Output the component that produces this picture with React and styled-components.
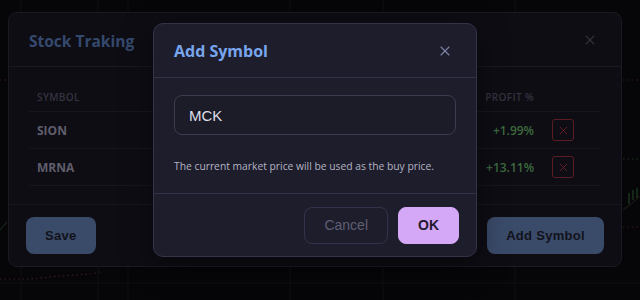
import styled, { createGlobalStyle } from "styled-components";
import { X } from "lucide-react";

const GlobalStyle = createGlobalStyle`
  html, body {
    margin: 0;
    padding: 0;
    background: #060609;
    font-family: "Open Sans", "Noto Sans", sans-serif;
  }
`;

const SPage = styled.div`
  position: relative;
  width: 640px;
  height: 300px;
  overflow: hidden;
  background: #060609;
  display: flex;
  align-items: flex-start;
`;

const SChart = styled.svg`
  position: absolute;
  inset: 0;
  width: 640px;
  height: 300px;
`;

const SPanel = styled.div`
  position: relative;
  margin: 12px 0 0 8px;
  width: 612px;
  height: 253px;
  background: #0e0d14;
  border: 1px solid #1b1a24;
  border-radius: 9px;
  display: flex;
  flex-direction: column;
`;

const SPanelHeader = styled.div`
  height: 53px;
  display: flex;
  align-items: center;
  justify-content: space-between;
  padding: 0 23px 0 20px;
  border-bottom: 1px solid #1a1922;
`;

const SPanelTitle = styled.h2`
  margin: 2px 0 0;
  font-size: 15.5px;
  font-weight: 700;
  color: #35496e;
`;

const SCloseIcon = styled(X)`
  color: ${(p) => p.$tone};
`;

const STable = styled.div`
  flex: 1;
  padding: 17px 21px 0 20px;
  display: flex;
  flex-direction: column;
`;

const SRow = styled.div`
  display: grid;
  grid-template-columns: 1fr 70px 58px;
  align-items: center;
  height: ${(p) => (p.$head ? "27px" : "36px")};
  padding: 0 8px;
  border-bottom: 1px solid #17161f;
`;

const SHeadCell = styled.span`
  font-size: 10px;
  font-weight: 600;
  letter-spacing: 0.4px;
  color: #34333f;
  text-align: ${(p) => (p.$right ? "right" : "left")};
  padding-bottom: 1px;
`;

const SSymbol = styled.span`
  font-size: 12px;
  font-weight: 700;
  color: #5f5e6c;
`;

const SProfit = styled.span`
  font-size: 12px;
  font-weight: 600;
  color: #3c6a3d;
  text-align: right;
`;

const SDelete = styled.div`
  justify-self: start;
  margin-left: 18px;
  width: 22px;
  height: 22px;
  box-sizing: border-box;
  border: 1px solid #5a1d23;
  border-radius: 3px;
  display: flex;
  align-items: center;
  justify-content: center;
  color: #6e2128;
`;

const SPanelFooter = styled.div`
  height: 61px;
  display: flex;
  align-items: center;
  justify-content: space-between;
  padding: 0 17px 0 17px;
  border-top: 1px solid #17161f;
`;

const SDimButton = styled.button`
  height: 37px;
  padding: 0 ${(p) => p.$pad}px;
  border: none;
  border-radius: 8px;
  background: #3a4b6a;
  color: #12121a;
  font-family: "Liberation Sans", Arial, sans-serif;
  font-size: 13px;
  font-weight: 700;
  letter-spacing: 0.3px;
`;

const SModal = styled.div`
  position: absolute;
  left: 153px;
  top: 23px;
  width: 322px;
  height: 232px;
  background: #1e1d2b;
  border: 1px solid #34334a;
  border-radius: 10px;
  display: flex;
  flex-direction: column;
  box-shadow: 0 8px 30px rgba(0, 0, 0, 0.5);
`;

const SModalHeader = styled.div`
  height: 53px;
  display: flex;
  align-items: center;
  justify-content: space-between;
  padding: 0 23px 0 20px;
  border-bottom: 1px solid #33324a;
`;

const SModalTitle = styled.h3`
  margin: 0;
  font-size: 16px;
  font-weight: 700;
  color: #78a6ee;
`;

const SModalBody = styled.div`
  height: 116px;
  padding: 17px 20px 0 20px;
  box-sizing: border-box;
  border-bottom: 1px solid #33324a;
`;

const SInput = styled.div`
  height: 40px;
  box-sizing: border-box;
  border: 1px solid #3c3b50;
  border-radius: 8px;
  background: #1c1b28;
  display: flex;
  align-items: center;
  padding-left: 14px;
  font-family: "Liberation Sans", Arial, sans-serif;
  font-size: 15px;
  color: #dedee8;
`;

const SHint = styled.p`
  margin: 24px 0 0;
  font-size: 10.3px;
  color: #b3b3c4;
`;

const SModalFooter = styled.div`
  flex: 1;
  display: flex;
  align-items: center;
  justify-content: flex-end;
  gap: 10px;
  padding: 0 17px;
`;

const SModalButton = styled.button`
  height: 37px;
  box-sizing: border-box;
  padding: 0 ${(p) => p.$pad}px;
  border-radius: 8px;
  border: 1px solid ${(p) => (p.$primary ? "#d4a8f7" : "#33324a")};
  background: ${(p) => (p.$primary ? "#d4a8f7" : "transparent")};
  color: ${(p) => (p.$primary ? "#23182e" : "#5f5f74")};
  font-family: "Liberation Sans", Arial, sans-serif;
  font-size: 14px;
  font-weight: ${(p) => (p.$primary ? 700 : 400)};
`;

const rows = [
  { symbol: "SION", profit: "+1.99%" },
  { symbol: "MRNA", profit: "+13.11%" },
];

function ChartBackground() {
  const dotted = { strokeDasharray: "1.5 3", strokeWidth: 1.2 };
  return (
    <SChart viewBox="0 0 640 300">
      <g stroke="#0e0e14" strokeWidth="1">
        <line x1="21" y1="0" x2="21" y2="300" />
        <line x1="98" y1="0" x2="98" y2="300" />
        <line x1="128" y1="0" x2="128" y2="300" />
        <line x1="290" y1="0" x2="290" y2="300" />
        <line x1="383" y1="0" x2="383" y2="300" />
        <line x1="515" y1="0" x2="515" y2="300" />
        <line x1="0" y1="283" x2="640" y2="283" />
      </g>
      <line x1="0" y1="80" x2="8" y2="80" stroke="#3a1418" {...dotted} />
      <line x1="623" y1="80" x2="640" y2="80" stroke="#3a1418" {...dotted} />
      <line x1="623" y1="159" x2="640" y2="159" stroke="#1d3a1d" {...dotted} />
      <line x1="623" y1="227" x2="640" y2="227" stroke="#3a1418" {...dotted} />
      <polyline
        points="0,279 30,279 60,276 90,274 100,272"
        fill="none"
        stroke="#3a1c22"
        {...dotted}
      />
      <path d="M623 210 Q632 204 640 196" fill="none" stroke="#2a1c1c" strokeWidth="1" />
      <g stroke="#234a26" strokeWidth="1">
        <line x1="629" y1="193" x2="629" y2="204" />
        <line x1="633" y1="190" x2="633" y2="200" />
        <line x1="637" y1="188" x2="637" y2="198" />
      </g>
      <path d="M0 230 L7 222" stroke="#1c331d" strokeWidth="1" />
    </SChart>
  );
}

function App() {
  return (
    <SPage>
      <GlobalStyle />
      <ChartBackground />
      <SPanel>
        <SPanelHeader>
          <SPanelTitle>Stock Traking</SPanelTitle>
          <SCloseIcon $tone="#32313d" size={16} strokeWidth={1.6} />
        </SPanelHeader>
        <STable>
          <SRow $head>
            <SHeadCell>SYMBOL</SHeadCell>
            <SHeadCell $right>PROFIT %</SHeadCell>
            <span />
          </SRow>
          {rows.map((r) => (
            <SRow key={r.symbol}>
              <SSymbol>{r.symbol}</SSymbol>
              <SProfit>{r.profit}</SProfit>
              <SDelete>
                <X size={13} strokeWidth={1.6} />
              </SDelete>
            </SRow>
          ))}
        </STable>
        <SPanelFooter>
          <SDimButton $pad={19}>Save</SDimButton>
          <SDimButton $pad={19}>Add Symbol</SDimButton>
        </SPanelFooter>
      </SPanel>

      <SModal>
        <SModalHeader>
          <SModalTitle>Add Symbol</SModalTitle>
          <SCloseIcon $tone="#7c84a8" size={16} strokeWidth={1.6} />
        </SModalHeader>
        <SModalBody>
          <SInput>MCK</SInput>
          <SHint>The current market price will be used as the buy price.</SHint>
        </SModalBody>
        <SModalFooter>
          <SModalButton $pad={19}>Cancel</SModalButton>
          <SModalButton $primary $pad={19}>OK</SModalButton>
        </SModalFooter>
      </SModal>
    </SPage>
  );
}

export default App;
